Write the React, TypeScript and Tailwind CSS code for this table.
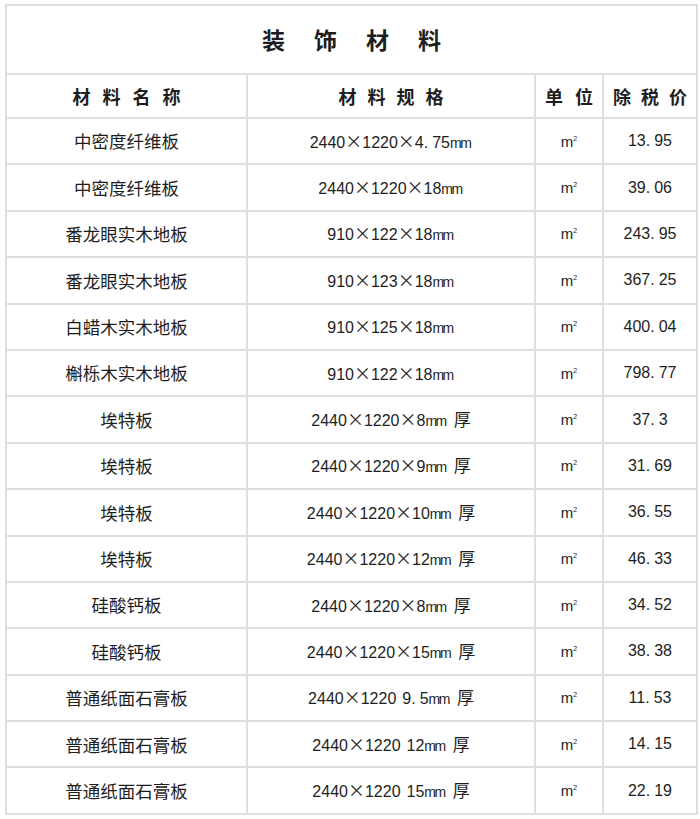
import React from "react";

const rows: [string, string, string][] = [
  ["中密度纤维板", "2440×1220×4.75mm", "13.95"],
  ["中密度纤维板", "2440×1220×18mm", "39.06"],
  ["番龙眼实木地板", "910×122×18mm", "243.95"],
  ["番龙眼实木地板", "910×123×18mm", "367.25"],
  ["白蜡木实木地板", "910×125×18mm", "400.04"],
  ["槲栎木实木地板", "910×122×18mm", "798.77"],
  ["埃特板", "2440×1220×8mm 厚", "37.3"],
  ["埃特板", "2440×1220×9mm 厚", "31.69"],
  ["埃特板", "2440×1220×10mm 厚", "36.55"],
  ["埃特板", "2440×1220×12mm 厚", "46.33"],
  ["硅酸钙板", "2440×1220×8mm 厚", "34.52"],
  ["硅酸钙板", "2440×1220×15mm 厚", "38.38"],
  ["普通纸面石膏板", "2440×1220 9.5mm 厚", "11.53"],
  ["普通纸面石膏板", "2440×1220 12mm 厚", "14.15"],
  ["普通纸面石膏板", "2440×1220 15mm 厚", "22.19"],
];

function Num({ text }: { text: string }) {
  const parts = text.split(".");
  return (
    <>
      {parts.map((p, i) => (
        <React.Fragment key={i}>
          {i > 0 && <span className="mr-[4px]">.</span>}
          {p}
        </React.Fragment>
      ))}
    </>
  );
}

function Spec({ text }: { text: string }) {
  const tokens = text.split(/(×|mm|厚|\s)/).filter((t) => t !== "");
  return (
    <span className="inline-flex items-baseline whitespace-pre">
      {tokens.map((t, i) => {
        if (t === "×")
          return (
            <span key={i} className="font-['Noto_Sans_CJK_SC',sans-serif] text-[17px]">
              ×
            </span>
          );
        if (t === "mm")
          return (
            <span key={i} className="text-[14px] tracking-[-1.5px] mr-[2px]">
              mm
            </span>
          );
        if (t === "厚")
          return (
            <span key={i} className="font-['Noto_Sans_CJK_SC',sans-serif] text-[17px]">
              厚
            </span>
          );
        if (t === " ")
          return <span key={i} className="w-[6px] inline-block"> </span>;
        return <Num key={i} text={t} />;
      })}
    </span>
  );
}

function Spaced({ chars, gap }: { chars: string; gap: string }) {
  return (
    <div className={`flex justify-center ${gap}`}>
      {Array.from(chars).map((c, i) => (
        <span key={i}>{c}</span>
      ))}
    </div>
  );
}

export default function App() {
  const cell = "border-2 border-[#dedede] text-center align-middle p-0 whitespace-nowrap overflow-hidden";
  return (
    <div className="w-[700px] h-[819px] bg-white pt-[4px] pl-[5px] text-[#1e1e1e]">
      <table className="border-collapse table-fixed w-[691px]">
        <colgroup>
          <col className="w-[241px]" />
          <col className="w-[288px]" />
          <col className="w-[68px]" />
          <col className="w-[94px]" />
        </colgroup>
        <tbody>
          <tr className="h-[69px]">
            <td colSpan={4} className={cell}>
              <div className="font-['Noto_Sans_CJK_SC',sans-serif] font-bold text-[23px] leading-none">
                <Spaced chars="装饰材料" gap="gap-[29px]" />
              </div>
            </td>
          </tr>
          <tr className="h-[44px] font-['Noto_Sans_CJK_SC',sans-serif] font-bold text-[18px] leading-none">
            <td className={cell}>
              <Spaced chars="材料名称" gap="gap-[12px]" />
            </td>
            <td className={cell}>
              <Spaced chars="材料规格" gap="gap-[11px]" />
            </td>
            <td className={cell}>
              <Spaced chars="单位" gap="gap-[12px]" />
            </td>
            <td className={cell}>
              <Spaced chars="除税价" gap="gap-[10px]" />
            </td>
          </tr>
          {rows.map(([name, spec, price], i) => (
            <tr key={i} className="h-[46.4px]">
              <td className={`${cell} font-['Noto_Sans_CJK_SC',sans-serif] text-[17.5px] leading-none`}>{name}</td>
              <td className={`${cell} font-['Liberation_Sans','Noto_Sans_CJK_SC',sans-serif] text-[16px] leading-none`}>
                <Spec text={spec} />
              </td>
              <td className={`${cell} font-['Liberation_Sans',sans-serif] text-[15px] leading-none`}>
                m<sup className="text-[7px] -top-[6px] relative align-baseline">2</sup>
              </td>
              <td className={`${cell} font-['Liberation_Sans',sans-serif] text-[16px] leading-none`}>
                <Num text={price} />
              </td>
            </tr>
          ))}
        </tbody>
      </table>
    </div>
  );
}
